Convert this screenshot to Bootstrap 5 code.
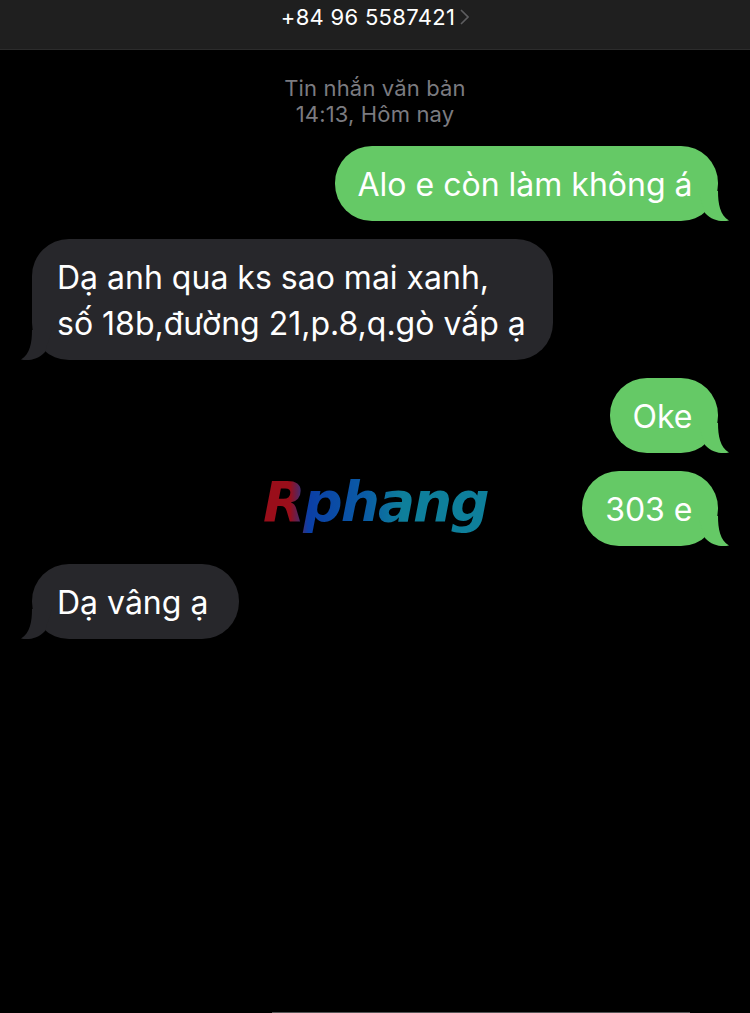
<!DOCTYPE html>
<html lang="en">
<head>
  <meta charset="UTF-8" />
  <title>Tin nhắn</title>
  <link href="https://cdn.jsdelivr.net/npm/bootstrap@5.3.0/dist/css/bootstrap.min.css" rel="stylesheet" />
  <style>
    html, body { height: 100%; }
    body { background: #000; font-family: Inter, "Liberation Sans", sans-serif; overflow: hidden; position: relative; }
    .top-bar { height: 50px; background: #1f1f1f; border-bottom: 1px solid #2c2c2c; padding-bottom: 15px; color: #fff; font-size: 22px; letter-spacing: .3px; }
    .top-bar svg { margin-left: 5px; }
    .stamp { color: #7b7b80; font-size: 22px; letter-spacing: .15px; line-height: 26px; padding-top: 25px; margin-bottom: 19px; }
    .thread { padding: 0 32px; gap: 18.4px; }
    .bubble { position: relative; font-size: 32px; line-height: 46.5px; color: #fff; padding: 16px 25.5px 12px; border-radius: 37px; }
    .bubble-out { background: #65c966; align-self: flex-end; padding-left: 23px; }
    .bubble-in { background: #27272b; align-self: flex-start; padding-left: 25px; padding-right: 27px; }
    .bubble-in.bubble-wide { padding-right: 31px; }
    .tail { position: absolute; bottom: 0; width: 30px; height: 30px; overflow: visible; }
    .bubble-out .tail { right: -10px; fill: #65c966; }
    .bubble-in .tail { left: -10px; fill: #27272b; transform: scaleX(-1); }
    .logo-mark { position: absolute; left: 263px; top: 468px; font-family: "DejaVu Sans", sans-serif; font-weight: 700; font-style: italic; font-size: 55px; line-height: 68px; letter-spacing: -2px; color: transparent; background: linear-gradient(90deg, #9a0e1a 0, #9a0e1a 12%, #0b3ea6 20%, #0a5ba5 45%, #0e7f9b 62%); -webkit-background-clip: text; background-clip: text; }
    .home-bar { position: absolute; left: 272px; bottom: 0; width: 418px; height: 1px; background: #555; }
  </style>
</head>
<body>
  <div class="top-bar d-flex align-items-center justify-content-center">
    <span>+84 96 5587421</span>
    <svg width="9" height="16" viewBox="0 0 9 16" fill="none" stroke="#5e5e60" stroke-width="1.6"><path d="M1 1l7 7-7 7"/></svg>
  </div>

  <div class="stamp text-center">Tin nhắn văn bản<br>14:13, Hôm nay</div>

  <div class="thread d-flex flex-column">
    <div class="bubble bubble-out">Alo e còn làm không á
      <svg class="tail" viewBox="0 0 30 30"><path d="M0 0H20C20 13 22 24 31 29.5 24 31 14 30 7 22Z"/></svg>
    </div>
    <div class="bubble bubble-in">Dạ anh qua ks sao mai xanh,<br>số 18b,đường 21,p.8,q.gò vấp ạ
      <svg class="tail" viewBox="0 0 30 30"><path d="M0 0H20C20 13 22 24 31 29.5 24 31 14 30 7 22Z"/></svg>
    </div>
    <div class="bubble bubble-out">Oke
      <svg class="tail" viewBox="0 0 30 30"><path d="M0 0H20C20 13 22 24 31 29.5 24 31 14 30 7 22Z"/></svg>
    </div>
    <div class="bubble bubble-out">303 e
      <svg class="tail" viewBox="0 0 30 30"><path d="M0 0H20C20 13 22 24 31 29.5 24 31 14 30 7 22Z"/></svg>
    </div>
    <div class="bubble bubble-in bubble-wide">Dạ vâng ạ
      <svg class="tail" viewBox="0 0 30 30"><path d="M0 0H20C20 13 22 24 31 29.5 24 31 14 30 7 22Z"/></svg>
    </div>
  </div>

  <div class="logo-mark">Rphang</div>
  <div class="home-bar"></div>

  <script src="https://cdn.jsdelivr.net/npm/bootstrap@5.3.0/dist/js/bootstrap.bundle.min.js"></script>
</body>
</html>
